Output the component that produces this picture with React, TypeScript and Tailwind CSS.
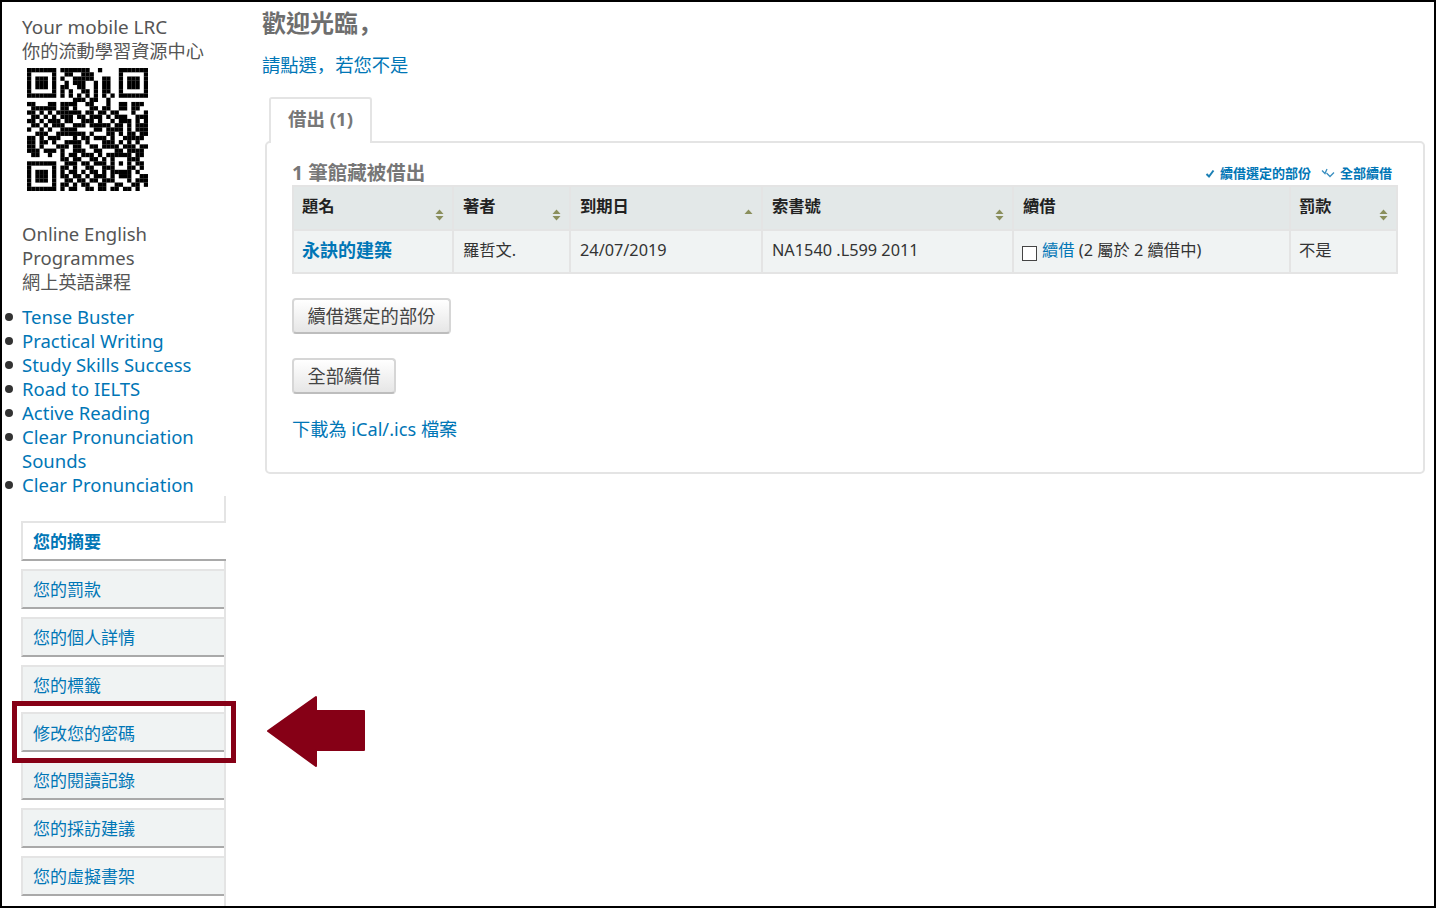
const font = "font-['Noto_Sans','Noto_Sans_CJK_TC',sans-serif]";

// 29x29 modules, finders and alignment written out with spaces around them
const qr = [
  "1111111 0 1111111001000 0 1111111",
  "1000001 0 0110011100000 0 1000001",
  "1011101 0 1001111100110 0 1011101",
  "1011101 0 0101110010110 0 1011101",
  "1011101 0 1100110010110 0 1011101",
  "1000001 0 1010011010110 0 1000001",
  "1111111 0 1010101010101 0 1111111",
  "0000000 0 0001110110010 0 0000000",
  "11000110111100110001001101110",
  "01111110110100011011001101100",
  "11010101111110110110110001001",
  "01101010111011011101011100111",
  "11010111011001110100101110101",
  "01101011100111011111011010111",
  "10010100111100001101111010111",
  "00111001111111010001101011011",
  "11010111000101101110100111110",
  "11011010011110100011101010100",
  "11010001110110011011110111011",
  "11101110100111001100011011110",
  "01100100101101110101 11111 011",
  "0000000 0 110110011010 10001 110",
  "1111111 0 011101101110 10101 011",
  "1000001 0 110100110011 10001 101",
  "1011101 0 101101011010 11111 010",
  "1011101 0 110110101110101110011",
  "1011101 0 011011011011100010111",
  "1000001 0 110101100110011001101",
  "1111111 0 101100110110110110100",
].map((r) => r.replace(/\s/g, "").padEnd(29, "0").slice(0, 29));

function QrCode() {
  return (
    <svg width="121" height="123" viewBox="0 0 29 29" preserveAspectRatio="none" className="ml-[5px] block">
      {qr.flatMap((row, y) =>
        row
          .split("")
          .map((c, x) => (c === "1" ? <rect key={`${x}-${y}`} x={x} y={y} width="1.02" height="1.02" fill="#000" /> : null)),
      )}
    </svg>
  );
}

function SortArrows({ up = true, down = true }: { up?: boolean; down?: boolean }) {
  return (
    <svg width="9" height="12" viewBox="0 0 9 12" className="absolute bottom-[8px] right-[8px]">
      {up && <path d="M4.5 0.5 L8.5 5 H0.5 Z" fill="#8a8f5c" />}
      {down && <path d="M4.5 11.5 L8.5 7 H0.5 Z" fill="#8a8f5c" />}
    </svg>
  );
}

function CheckIcon() {
  return (
    <svg width="10" height="10" viewBox="0 0 10 10" className="shrink-0">
      <path d="M1.5 5 L4 7.5 L8.5 1.5" fill="none" stroke="#1a7fb5" strokeWidth="2" />
    </svg>
  );
}

function DoubleCheckIcon() {
  return (
    <svg width="14" height="11" viewBox="0 0 14 11" className="shrink-0">
      <path d="M1 2.5 L4 5.5 L6 1" fill="none" stroke="#3a8fc0" strokeWidth="1.3" />
      <path d="M5.5 5 L9 8.5 L13 4.5" fill="none" stroke="#3a8fc0" strokeWidth="1.3" />
    </svg>
  );
}

const programmes = [
  "Tense Buster",
  "Practical Writing",
  "Study Skills Success",
  "Road to IELTS",
  "Active Reading",
  "Clear Pronunciation Sounds",
  "Clear Pronunciation",
];

const navItems = ["您的罰款", "您的個人詳情", "您的標籤", "修改您的密碼", "您的閱讀記錄", "您的採訪建議", "您的虛擬書架"];

const columns = [
  { label: "題名", width: "w-[160px] pl-[8px]" },
  { label: "著者", width: "w-[117px] pl-[9px]" },
  { label: "到期日", width: "w-[192px] pl-[9px]", sort: "up" },
  { label: "索書號", width: "w-[251px] pl-[9px]" },
  { label: "續借", width: "w-[277px] pl-[9px]", sort: "none" },
  { label: "罰款", width: "w-[107px] pl-[8px]" },
];

function Sidebar() {
  return (
    <aside className="flex w-[224px] shrink-0 flex-col">
      <div className="pl-[20px] pt-[13px] text-[18.5px] leading-[24px] text-[#555]">
        <p className="text-[18.9px]">Your mobile LRC</p>
        <p className="text-[18.2px]">你的流動學習資源中心</p>
        <div className="mt-[5px]">
          <QrCode />
        </div>
        <p className="mt-[31px] w-[170px]">Online English Programmes</p>
        <p className="text-[18.2px]">網上英語課程</p>
      </div>
      <ul className="mt-[11px] pl-[20px] text-[18.5px] leading-[24px] text-[#0076b6]">
        {programmes.map((name) => (
          <li key={name} className="relative w-[190px]">
            <span className="absolute left-[-17px] top-[8px] h-[8px] w-[8px] rounded-full bg-[#333]" />
            {name}
          </li>
        ))}
      </ul>
      <nav className="ml-[19px] mt-[-1px] flex grow flex-col gap-[7.85px] border-r-2 border-[#e4e4e4] pt-[25px] text-[17px]">
        <a className="mr-[-2px] flex h-[40px] shrink-0 items-center border-2 border-r-0 border-[#e4e4e4] border-b-[#a9a9a9] bg-white pl-[10px] pt-[2px] font-bold text-[#0076b6]">
          您的摘要
        </a>
        {navItems.map((item) => (
          <a key={item} className="flex h-[40px] shrink-0 items-center border-2 border-r-0 border-[#e4e4e4] border-b-[#a9a9a9] bg-[#f0f3f3] pl-[10px] pt-[2px] text-[#0076b6]">
            {item}
          </a>
        ))}
      </nav>
    </aside>
  );
}

function LoansTable() {
  return (
    <table className="w-[1104px] table-fixed border-collapse text-[16.3px] text-[#333]">
      <thead>
        <tr className="h-[44px] bg-[#e3e8e8]">
          {columns.map((c) => (
            <th key={c.label} className={`relative border-2 border-[#e4e4e4] pb-[3px] text-left align-middle font-bold text-[#222] ${c.width}`}>
              {c.label}
              {c.sort === "up" ? <SortArrows down={false} /> : c.sort === "none" ? null : <SortArrows />}
            </th>
          ))}
        </tr>
      </thead>
      <tbody>
        <tr className="h-[43px] bg-[#f0f3f3]">
          <td className="border-2 border-[#e4e4e4] pb-[2px] pl-[8px] text-[18px] font-bold text-[#0076b6]">永訣的建築</td>
          <td className="border-2 border-[#e4e4e4] pb-[2px] pl-[9px]">羅哲文.</td>
          <td className="border-2 border-[#e4e4e4] pb-[2px] pl-[9px]">24/07/2019</td>
          <td className="border-2 border-[#e4e4e4] pb-[2px] pl-[9px]">NA1540 .L599 2011</td>
          <td className="border-2 border-[#e4e4e4] pb-[2px] pl-[8px]">
            <span className="flex items-center gap-[5px]">
              <span className="mt-[6px] h-[15px] w-[15px] border-[1.5px] border-[#444] bg-white" />
              <span>
                <span className="text-[#0076b6]">續借</span> (2 屬於 2 續借中)
              </span>
            </span>
          </td>
          <td className="border-2 border-[#e4e4e4] pb-[2px] pl-[8px]">不是</td>
        </tr>
      </tbody>
    </table>
  );
}

function ActionButton({ children }: { children: string }) {
  return (
    <button className="h-[36px] w-fit rounded-[4px] border-2 border-[#d6d6d6] border-b-[#bdbdbd] bg-gradient-to-b from-white to-[#e6e6e6] px-[13.5px] text-[18.3px] text-[#444]">
      {children}
    </button>
  );
}

export default function App() {
  return (
    <div className={`relative flex h-[908px] w-[1436px] overflow-hidden border-2 border-black bg-white ${font}`}>
      <Sidebar />
      <main className="ml-[36px] grow pr-[10px]">
        <h1 className="mt-[5px] h-[30px] text-[24px] font-bold leading-[30px] text-[#6e6e6e]">
          歡迎光臨<span className="font-['Noto_Sans_CJK_SC',sans-serif]">，</span>
        </h1>
        <a className="mt-[13px] block h-[28px] text-[18.3px] leading-[28px] text-[#0076b6]">
          請點選<span className="font-['Noto_Sans_CJK_SC',sans-serif]">，</span>若您不是
        </a>
        <div className="relative z-10 mb-[-2px] ml-[7px] mt-[19px] flex h-[46px] w-[103px] items-center justify-center rounded-t-[3px] border-2 border-b-0 border-[#e4e4e4] bg-white pb-[4px] text-[18.5px] font-bold text-[#777]">
          借出 (1)
        </div>
        <section className="ml-[3px] h-[333px] w-[1160px] rounded-[5px] border-2 border-[#e4e4e4] bg-white pl-[25px] pt-[17px]">
          <div className="flex h-[25px] w-[1104px] items-center justify-between">
            <h2 className="text-[19.5px] font-bold text-[#777]">1 筆館藏被借出</h2>
            <div className="flex items-center gap-[10px] pr-[4px] pt-[2px] text-[13px] font-bold text-[#0076b6]">
              <span className="flex items-center gap-[5px]">
                <CheckIcon />
                續借選定的部份
              </span>
              <span className="flex items-center gap-[5px]">
                <DoubleCheckIcon />
                全部續借
              </span>
            </div>
          </div>
          <LoansTable />
          <div className="mt-[24px] flex flex-col gap-[24px]">
            <ActionButton>續借選定的部份</ActionButton>
            <ActionButton>全部續借</ActionButton>
          </div>
          <a className="mt-[21px] block text-[18.2px] leading-[28px] text-[#0076b6]">下載為 iCal/.ics 檔案</a>
        </section>
      </main>
      <div className="absolute left-[10px] top-[699px] h-[62px] w-[224px] border-[5px] border-[#860016]" />
      <svg width="100" height="76" viewBox="0 0 100 76" className="absolute left-[264px] top-[692px]">
        <path d="M2 37 L50 3 V17 H98 V56 H50 V72 Z" fill="#860016" stroke="#860016" strokeWidth="2" strokeLinejoin="round" />
      </svg>
    </div>
  );
}
